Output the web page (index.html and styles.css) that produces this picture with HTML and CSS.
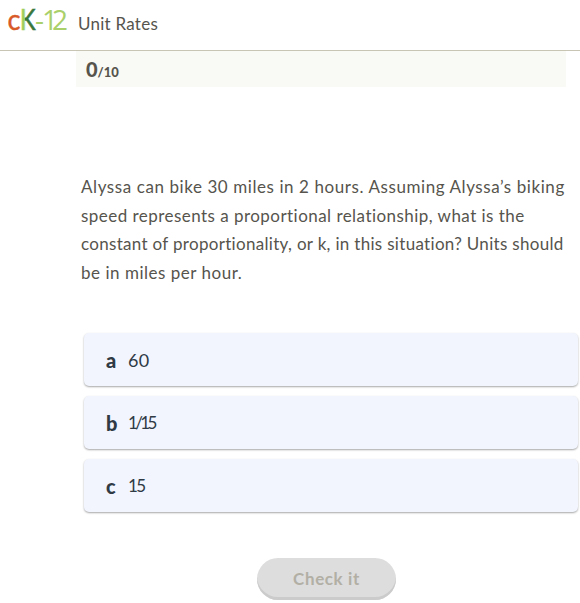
FILE: index.html
```html
<!DOCTYPE html>
<html lang="en">
<head>
    <meta charset="UTF-8">
    <meta name="viewport" content="width=device-width, initial-scale=1.0">
    <title>Unit Rates</title>
    <link rel="stylesheet" href="styles.css">
</head>
<body>
    <header class="header">
        <svg class="logo" width="62" height="40" viewBox="0 0 62 40" role="img" aria-label="CK-12">
            <defs>
                <linearGradient id="kFill" gradientUnits="userSpaceOnUse" x1="12" y1="0" x2="28" y2="0">
                    <stop offset="0.3" stop-color="#9fcd5c"/>
                    <stop offset="0.3" stop-color="#39763b"/>
                </linearGradient>
            </defs>
            <text class="logo-c" x="-0.5" y="29.5" textLength="13" lengthAdjust="spacingAndGlyphs">c</text>
            <text class="logo-k" x="12" y="29.5" textLength="15.5" lengthAdjust="spacingAndGlyphs">K</text>
            <text class="logo-num" x="27 34 44" y="29.5">-12</text>
        </svg>
        <h1 class="title">Unit Rates</h1>
    </header>
    <main class="quiz">
        <div class="score"><span class="points">0</span>/10</div>
        <p class="question">
            <span class="line line1">Alyssa can bike 30 miles in 2 hours. Assuming Alyssa’s biking</span>
            <span class="line line2">speed represents a proportional relationship, what is the</span>
            <span class="line line3">constant of proportionality, or k, in this situation? Units should</span>
            <span class="line line4">be in miles per hour.</span>
        </p>
        <div class="options">
            <div class="option"><b class="letter">a</b><span class="answer wide">60</span></div>
            <div class="option"><b class="letter">b</b><span class="answer narrow">1/15</span></div>
            <div class="option"><b class="letter">c</b><span class="answer">15</span></div>
        </div>
        <button type="button" class="check" disabled>Check it</button>
    </main>
</body>
</html>
```
FILE: styles.css
```css
* {
    box-sizing: border-box;
}
body {
    margin: 0;
    background: #fff;
    color: #56544d;
    font-family: Lato, "Liberation Sans", sans-serif;
    overflow: hidden;
}
.header {
    display: flex;
    height: 51px;
    padding-left: 8px;
    border-bottom: 1px solid #c9c5b5;
}
.logo {
    font-family: "Open Sans", sans-serif;
    font-size: 28px;
}
.logo-c {
    fill: #d85a28;
    stroke: #d85a28;
    stroke-width: 0.4px;
    font-family: Lato, sans-serif;
}
.logo-k {
    fill: url(#kFill);
    stroke: url(#kFill);
    stroke-width: 0.7px;
    font-family: Lato, sans-serif;
}
.logo-num {
    fill: #a9d06b;
}
.title {
    margin: 13px 0 0 8px;
    font-size: 17px;
    line-height: 22px;
    font-weight: 400;
    letter-spacing: 0.25px;
}
.quiz {
    display: flex;
    flex-direction: column;
    padding-left: 76px;
}
.score {
    width: 490px;
    height: 36px;
    padding-left: 10px;
    background: #f9faf5;
    font-size: 13px;
    font-weight: 900;
    line-height: 36px;
}
.points {
    font-size: 20px;
}
.question {
    margin: 86px 0 0 5px;
    font-size: 17px;
    line-height: 28.7px;
}
.line {
    display: block;
    width: max-content;
    white-space: nowrap;
}
.line1 {
    letter-spacing: 0.58px;
}
.line2 {
    letter-spacing: 0.46px;
}
.line3 {
    letter-spacing: 0.31px;
}
.line4 {
    letter-spacing: 0.52px;
}
.options {
    display: flex;
    flex-direction: column;
    gap: 10px;
    width: 494px;
    margin: 45px 0 0 8px;
}
.option {
    display: flex;
    align-items: center;
    height: 53px;
    padding: 1px 0 0 22px;
    border-radius: 5px;
    background: #f2f5fe;
    box-shadow: 0 1px 2px rgba(0, 0, 0, 0.35);
    color: #2f3a45;
    font-size: 17px;
}
.letter {
    width: 22px;
    font-size: 20px;
    font-weight: 900;
}
.answer {
    letter-spacing: -1.5px;
}
.wide {
    font-size: 18px;
    letter-spacing: 0.3px;
}
.narrow {
    letter-spacing: -2.6px;
}
.check {
    width: 139px;
    height: 42px;
    margin: 46px 0 0 181px;
    padding: 0;
    border: none;
    border-radius: 21px;
    background: #ddd;
    box-shadow: inset 0 -3px 0 #cbcbcb;
    color: #b2afa5;
    font-family: inherit;
    font-size: 17px;
    font-weight: 700;
    letter-spacing: 0.6px;
}
```
